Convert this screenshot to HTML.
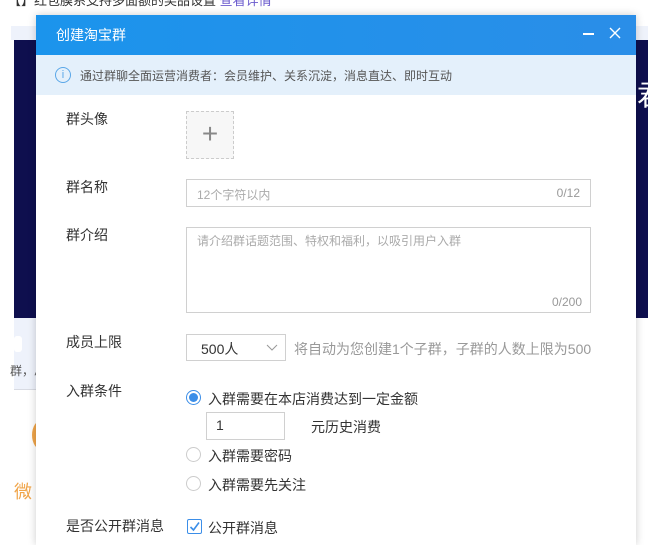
<!DOCTYPE html>
<html><head><meta charset="utf-8"><style>
*{margin:0;padding:0;box-sizing:border-box}
body{width:648px;height:537px;overflow:hidden;background:#fff;position:relative;font-family:"Liberation Sans","Noto Sans CJK SC",sans-serif;font-size:14px;color:#333}
.abs{position:absolute}
.lbl{position:absolute;left:66px;font-size:14px;color:#333}
.box{position:absolute;border:1px solid #d0d0d0;background:#fff}
.ph{color:#aaa;font-size:12px}
.radio{position:absolute;width:15px;height:15px;border:1px solid #ccc;border-radius:50%;background:#fff}
</style></head><body>
<div class="abs" style="left:8px;top:-10px;font-size:13px;color:#333;white-space:nowrap">【】红包膜系支持多面额的奖品设置 <span style="color:#6a5acd">查看详情</span></div>
<div class="abs" style="left:11px;top:26px;width:637px;height:14px;background:#eef2fb"></div>
<div class="abs" style="left:14px;top:40px;width:634px;height:278px;background:#0e0f4e"></div>
<div class="abs" style="left:637px;top:74px;color:#fff;font-size:28px">君</div>
<div class="abs" style="left:14px;top:318px;width:22px;height:72px;background:#eef2fb;border-bottom:1px solid #d8dbe3"></div>
<div class="abs" style="left:14px;top:336px;width:8px;height:16px;background:#fff;border-radius:3px"></div>
<div class="abs" style="left:10px;top:362px;font-size:12px;color:#555">群，总</div>
<div class="abs" style="left:32px;top:420px;width:20px;height:30px;border-radius:50%;background:#f0a54a"></div>
<div class="abs" style="left:14px;top:478px;font-size:18px;color:#f0a54a">微</div>
<div class="abs" style="left:36px;top:15px;width:600px;height:530px;background:#fff;box-shadow:0 0 8px rgba(0,0,0,.2)"></div>
<div class="abs" style="left:36px;top:15px;width:600px;height:40px;background:linear-gradient(90deg,#1b94ec,#2a8ee8)"></div>
<div class="abs" style="left:56px;top:25px;color:#fff;font-size:14px">创建淘宝群</div>
<div class="abs" style="left:583px;top:33px;width:11px;height:1.5px;background:#fff"></div>
<svg class="abs" style="left:609px;top:27px" width="12" height="12"><path d="M1 1L11 11M11 1L1 11" stroke="#fff" stroke-width="1.4"/></svg>
<div class="abs" style="left:36px;top:55px;width:600px;height:40px;background:#e4f0fb"></div>
<div class="abs" style="left:55px;top:67px;width:16px;height:16px;border:1px solid #5aa7e8;border-radius:50%;color:#5aa7e8;font-size:11px;text-align:center;line-height:14px">i</div>
<div class="abs" style="left:80px;top:67px;font-size:12px;color:#555">通过群聊全面运营消费者：会员维护、关系沉淀，消息直达、即时互动</div>
<div class="lbl" style="top:109px">群头像</div>
<div class="abs" style="left:186px;top:111px;width:48px;height:48px;border:1px dashed #ccc;background:#f7f7f7;color:#888;font-size:28px;text-align:center;line-height:44px;font-weight:300">+</div>
<div class="lbl" style="top:177px">群名称</div>
<div class="box" style="left:186px;top:179px;width:405px;height:28px"><span class="ph abs" style="left:10px;top:6px">12个字符以内</span><span class="ph abs" style="right:10px;top:6px;color:#999">0/12</span></div>
<div class="lbl" style="top:225px">群介绍</div>
<div class="box" style="left:186px;top:227px;width:405px;height:86px"><span class="ph abs" style="left:10px;top:4px">请介绍群话题范围、特权和福利，以吸引用户入群</span><span class="ph abs" style="right:8px;bottom:3px;color:#999">0/200</span></div>
<div class="lbl" style="top:332px">成员上限</div>
<div class="box" style="left:186px;top:334px;width:100px;height:27px"><span class="abs" style="left:14px;top:4px;font-size:14px">500人</span><svg class="abs" style="left:79px;top:9px" width="12" height="8"><path d="M1 1L6 6L11 1" stroke="#999" fill="none"/></svg></div>
<div class="abs" style="left:294px;top:339px;color:#999;font-size:14px">将自动为您创建1个子群，子群的人数上限为500</div>
<div class="lbl" style="top:381px">入群条件</div>
<div class="radio" style="left:186px;top:390px;border-color:#3b8ee8"><div style="width:9px;height:9px;border-radius:50%;background:#3b8ee8;margin:2px"></div></div>
<div class="abs" style="left:208px;top:389px">入群需要在本店消费达到一定金额</div>
<div class="box" style="left:206px;top:412px;width:79px;height:28px"><span class="abs" style="left:9px;top:4px">1</span></div>
<div class="abs" style="left:311px;top:417px">元历史消费</div>
<div class="radio" style="left:186px;top:447px"></div>
<div class="abs" style="left:208px;top:446px">入群需要密码</div>
<div class="radio" style="left:186px;top:476px"></div>
<div class="abs" style="left:208px;top:475px">入群需要先关注</div>
<div class="lbl" style="top:516px">是否公开群消息</div>
<div class="abs" style="left:187px;top:519px;width:15px;height:15px;border:1px solid #3b8ee8;border-radius:2px"><svg width="13" height="13"><path d="M2.5 7L5.5 10L11 2.5" stroke="#3b8ee8" stroke-width="1.6" fill="none"/></svg></div>
<div class="abs" style="left:208px;top:518px">公开群消息</div>
</body></html>
